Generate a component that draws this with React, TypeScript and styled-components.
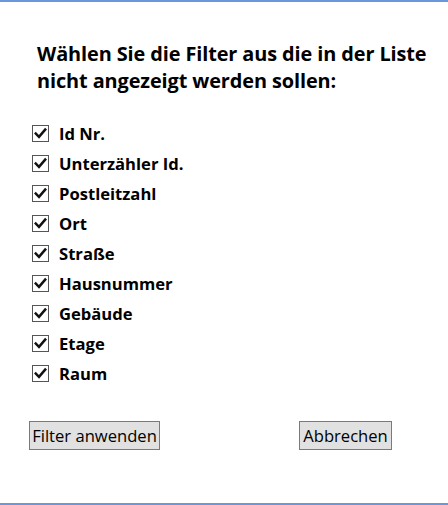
import styled, { createGlobalStyle } from "styled-components";

const GlobalStyle = createGlobalStyle`
  html, body {
    margin: 0;
    padding: 0;
    background: #ffffff;
  }
`;

const Window = styled.div`
  box-sizing: border-box;
  width: 448px;
  height: 505px;
  border-top: 2px solid #6a96dd;
  border-bottom: 2px solid #6a96dd;
  background: #ffffff;
  font-family: "Open Sans", "Noto Sans", sans-serif;
  color: #000000;
  display: flex;
  flex-direction: column;
`;

const Heading = styled.h1`
  margin: 38px 0 0 37px;
  font-size: 19.9px;
  font-weight: 700;
  line-height: 27px;
  letter-spacing: -0.1px;
  white-space: nowrap;
`;

const FilterList = styled.div`
  margin: 24px 0 0 32px;
  display: flex;
  flex-direction: column;
`;

const Row = styled.label`
  display: flex;
  align-items: center;
  height: 30.1px;
  gap: 10px;
  font-size: 16.6px;
  font-weight: 700;
  cursor: pointer;
`;

const Box = styled.span`
  box-sizing: border-box;
  width: 17px;
  height: 17px;
  border: 1px solid #555555;
  background: #ffffff;
  display: flex;
  align-items: center;
  justify-content: center;
`;

const Actions = styled.div`
  margin: 32px 0 0 29px;
  display: flex;
  gap: 139px;
`;

const Button = styled.button<{ $width: number }>`
  box-sizing: border-box;
  width: ${(p) => p.$width}px;
  height: 29px;
  padding: 0;
  border: 1px solid #7a7a7a;
  background: #e1e1e1;
  font-family: "Open Sans", "Noto Sans", sans-serif;
  font-size: 16.6px;
  color: #000000;
  cursor: pointer;
`;

const filters = [
  "Id Nr.",
  "Unterzähler Id.",
  "Postleitzahl",
  "Ort",
  "Straße",
  "Hausnummer",
  "Gebäude",
  "Etage",
  "Raum",
];

function Check() {
  return (
    <svg width="13" height="13" viewBox="0 0 13 13" fill="none">
      <path
        d="M1.8 6.6 L5 9.8 L11.2 2.6"
        stroke="#111"
        strokeWidth="2.5"
        strokeLinecap="square"
      />
    </svg>
  );
}

export default function App() {
  return (
    <>
      <GlobalStyle />
      <Window>
        <Heading>
          Wählen Sie die Filter aus die in der Liste
          <br />
          nicht angezeigt werden sollen:
        </Heading>
        <FilterList>
          {filters.map((f) => (
            <Row key={f}>
              <Box>
                <Check />
              </Box>
              {f}
            </Row>
          ))}
        </FilterList>
        <Actions>
          <Button $width={131}>Filter anwenden</Button>
          <Button $width={93}>Abbrechen</Button>
        </Actions>
      </Window>
    </>
  );
}
